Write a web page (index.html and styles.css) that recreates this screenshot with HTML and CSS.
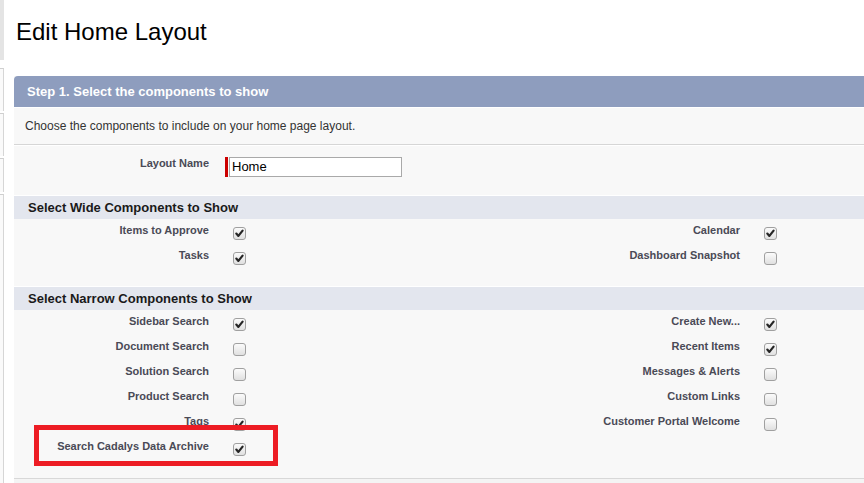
FILE: index.html
```html
<!DOCTYPE html>
<html>
<head>
<meta charset="utf-8">
<link rel="stylesheet" href="styles.css">
</head>
<body>
<div class="page">
  <div class="side">
    <div class="side-top"></div>
    <div class="side-box b1"></div>
    <div class="side-box b2"></div>
    <div class="side-box b3"></div>
    <div class="side-box b4"></div>
  </div>
  <div class="main">
    <h1 class="title">Edit Home Layout</h1>
    <div class="panel">
      <div class="panel-head">Step 1. Select the components to show</div>
      <div class="panel-desc">Choose the components to include on your home page layout.</div>
      <div class="name-block">
        <div class="grid">
          <div class="lbl">Layout Name</div>
          <div class="data">
            <span class="req"><span class="req-bar"></span><span class="input">Home</span></span>
          </div>
        </div>
      </div>
      <div class="subhead">Select Wide Components to Show</div>
      <div class="rows">
        <div class="grid">
          <div class="lbl">Items to Approve</div><div class="data"><span class="cb on"><svg viewBox="0 0 13 13"><path d="M3.3 6.6 L5.4 8.9 L9.6 3.6"/></svg></span></div>
          <div class="lbl">Calendar</div><div class="data"><span class="cb on"><svg viewBox="0 0 13 13"><path d="M3.3 6.6 L5.4 8.9 L9.6 3.6"/></svg></span></div>
          <div class="lbl">Tasks</div><div class="data"><span class="cb on"><svg viewBox="0 0 13 13"><path d="M3.3 6.6 L5.4 8.9 L9.6 3.6"/></svg></span></div>
          <div class="lbl">Dashboard Snapshot</div><div class="data"><span class="cb"></span></div>
        </div>
      </div>
      <div class="subhead">Select Narrow Components to Show</div>
      <div class="rows narrow">
        <div class="grid">
          <div class="lbl">Sidebar Search</div><div class="data"><span class="cb on"><svg viewBox="0 0 13 13"><path d="M3.3 6.6 L5.4 8.9 L9.6 3.6"/></svg></span></div>
          <div class="lbl">Create New...</div><div class="data"><span class="cb on"><svg viewBox="0 0 13 13"><path d="M3.3 6.6 L5.4 8.9 L9.6 3.6"/></svg></span></div>
          <div class="lbl">Document Search</div><div class="data"><span class="cb"></span></div>
          <div class="lbl">Recent Items</div><div class="data"><span class="cb on"><svg viewBox="0 0 13 13"><path d="M3.3 6.6 L5.4 8.9 L9.6 3.6"/></svg></span></div>
          <div class="lbl">Solution Search</div><div class="data"><span class="cb"></span></div>
          <div class="lbl">Messages &amp; Alerts</div><div class="data"><span class="cb"></span></div>
          <div class="lbl">Product Search</div><div class="data"><span class="cb"></span></div>
          <div class="lbl">Custom Links</div><div class="data"><span class="cb"></span></div>
          <div class="lbl">Tags</div><div class="data"><span class="cb on"><svg viewBox="0 0 13 13"><path d="M3.3 6.6 L5.4 8.9 L9.6 3.6"/></svg></span></div>
          <div class="lbl">Customer Portal Welcome</div><div class="data"><span class="cb"></span></div>
          <div class="lbl">Search Cadalys Data Archive</div><div class="data"><span class="cb on"><svg viewBox="0 0 13 13"><path d="M3.3 6.6 L5.4 8.9 L9.6 3.6"/></svg></span></div>
          <div class="lbl"></div><div class="data"></div>
        </div>
        <div class="highlight"></div>
      </div>
      <div class="panel-foot"></div>
    </div>
  </div>
</div>
</body>
</html>
```

FILE: styles.css
```css
html, body {
  margin: 0;
  padding: 0;
  background: #fff;
  font-family: Arial, "Liberation Sans", sans-serif;
  overflow: hidden;
}
.page {
  display: flex;
  width: 864px;
  height: 483px;
  overflow: hidden;
}
.side {
  width: 4px;
  flex: none;
  display: flex;
  flex-direction: column;
}
.side-top {
  height: 60px;
  background: #e4e4e4;
  margin-bottom: 8px;
}
.side-box {
  border-top: 1px solid #cfcfcf;
  border-right: 1px solid #d6d6d6;
  background: #fafafa;
}
.side-box.b1 { height: 42px; }
.side-box.b2 { height: 42px; margin-top: 2px; }
.side-box.b3 { height: 33px; margin-top: 2px; }
.side-box.b4 { flex: 1; margin-top: 2px; }
.main {
  flex: 1;
  margin-left: 10px;
  padding-top: 18px;
  min-width: 0;
}
.title {
  margin: 0 0 30px 2px;
  font-size: 24px;
  line-height: 28px;
  font-weight: normal;
  color: #000;
}
.panel {
  width: 1062px;
  background: #f8f8f8;
}
.panel-head {
  height: 31px;
  line-height: 31px;
  background: #8e9dbe;
  border-top-left-radius: 4px;
  color: #fff;
  font-weight: bold;
  font-size: 13px;
  padding-left: 13px;
  border-bottom: 1px solid #fff;
}
.panel-desc {
  height: 36px;
  line-height: 36px;
  font-size: 12px;
  color: #333;
  padding-left: 11px;
  border-bottom: 1px solid #d6d6d6;
}
.name-block {
  border-top: 1px solid #fff;
  height: 39px;
  padding-top: 10px;
}
.grid {
  display: grid;
  grid-template-columns: 205px 326px 205px 1fr;
  grid-auto-rows: 25px;
}
.lbl {
  text-align: right;
  padding: 4px 10px 0 0;
  font-size: 11px;
  line-height: 14px;
  font-weight: bold;
  color: #4a4a56;
  white-space: nowrap;
}
.name-block .lbl {
  padding-top: 0;
}
.data {
  padding: 8px 0 0 14px;
}
.name-block .data {
  padding: 1px 0 0 10px;
}
.req {
  position: relative;
  display: inline-block;
}
.req-bar {
  position: absolute;
  left: -4px;
  top: 0;
  width: 3px;
  height: 20px;
  background: #c00;
}
.input {
  display: block;
  width: 169px;
  height: 18px;
  line-height: 18px;
  border: 1px solid #a9a9a9;
  background: #fff;
  font-size: 13px;
  color: #000;
  padding-left: 2px;
}
.subhead {
  border-top: 1px solid #fff;
  height: 23px;
  line-height: 23px;
  background: #e3e6ee;
  font-size: 13px;
  font-weight: bold;
  color: #1a1a1a;
  padding-left: 14px;
}
.rows {
  height: 67px;
}
.rows.narrow {
  position: relative;
  height: 168px;
  border-bottom: 1px solid #d8d8d8;
}
.cb {
  display: block;
  width: 11px;
  height: 11px;
  border: 1px solid #a0a0a0;
  border-radius: 3px;
  background: linear-gradient(#fbfbfb, #e0e0e0);
  position: relative;
}
.cb svg {
  position: absolute;
  left: -1px;
  top: -1px;
  width: 13px;
  height: 13px;
}
.cb svg path {
  fill: none;
  stroke: #262626;
  stroke-width: 2.2;
  stroke-linecap: round;
  stroke-linejoin: round;
}
.highlight {
  position: absolute;
  left: 20px;
  top: 115px;
  width: 234px;
  height: 31px;
  border: 5px solid #ed1c24;
}
.panel-foot {
  height: 8px;
  background: #f4f4f4;
}
```
